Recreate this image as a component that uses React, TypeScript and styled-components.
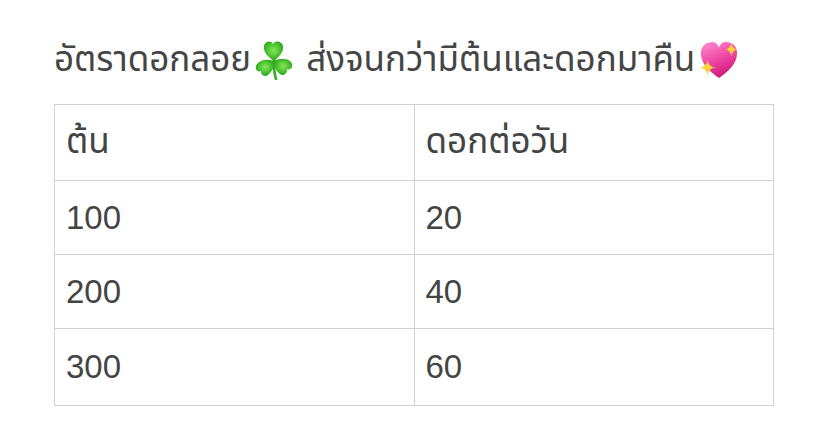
import React from "react";
import styled, { createGlobalStyle } from "styled-components";

const Global = createGlobalStyle`
  html, body { margin: 0; padding: 0; background: #ffffff; }
  body { font-family: "Noto Sans Thai", "Noto Sans", "DejaVu Sans", "Liberation Sans", sans-serif; color: #444444; }
`;

const Page = styled.div`
  width: 828px;
  height: 447px;
  box-sizing: border-box;
  padding: 22px 54px 0 54px;
  background: #ffffff;
`;

const Title = styled.h1`
  margin: 0;
  height: 82px;
  display: flex;
  align-items: center;
  font-size: 35px;
  font-weight: 400;
  color: #454545;
  white-space: nowrap;
  line-height: 1;
  padding-bottom: 6px;
  box-sizing: border-box;
`;

const Emoji = styled.svg<{ $l: number; $r: number }>`
  width: 40px;
  height: 40px;
  flex: none;
  margin: 0 ${(p) => p.$r}px 0 ${(p) => p.$l}px;
`;

const Table = styled.table`
  width: 720px;
  border-collapse: collapse;
  table-layout: fixed;
`;

const Cell = styled.td<{ $head?: boolean; $h: number }>`
  border: 1px solid #d2d2d2;
  height: ${(p) => p.$h}px;
  box-sizing: border-box;
  padding: 0 0 0 11px;
  font-size: ${(p) => (p.$head ? 35 : 33)}px;
  color: #444444;
  vertical-align: middle;
  font-family: ${(p) =>
    p.$head ? `"Noto Sans Thai", "DejaVu Sans", sans-serif` : `"Liberation Sans", sans-serif`};
`;

const Shamrock = () => (
  <Emoji viewBox="0 0 40 40" $l={3} $r={12}>
    <defs>
      <radialGradient id="lf" cx="50%" cy="45%" r="60%">
        <stop offset="0%" stopColor="#8be55a" />
        <stop offset="60%" stopColor="#46c12c" />
        <stop offset="100%" stopColor="#2a961c" />
      </radialGradient>
    </defs>
    <path d="M20 21 C20 28 20 33 22 39" stroke="#3aa82a" strokeWidth="2.6" fill="none" strokeLinecap="round" />
    <g fill="url(#lf)">
      <path d="M20 21 C14 17 9 12 10 6 C11 1 17 0 19 4 C21 0 28 1 29 6 C30 12 25 17 20 21 Z" />
      <path d="M20 21 C14 19 7 19 3 24 C0 28 3 33 7 31 C6 35 12 38 15 34 C19 30 21 26 20 21 Z" />
      <path d="M20 21 C26 18 33 18 37 22 C40 26 37 31 33 29 C34 33 29 37 26 34 C22 31 20 26 20 21 Z" />
    </g>
  </Emoji>
);

const SparkleHeart = () => (
  <Emoji viewBox="0 0 42 42" $l={3} $r={0}>
    <defs>
      <linearGradient id="hg" x1="0" y1="0" x2="0.4" y2="1">
        <stop offset="0%" stopColor="#ff8fd0" />
        <stop offset="55%" stopColor="#f04aa6" />
        <stop offset="100%" stopColor="#d21c7c" />
      </linearGradient>
    </defs>
    <path d="M22 40 C12 33 3 25 3 14 C3 6 9 2 15 2 C18 2 21 4 22 8 C23 4 26 2 29 2 C36 2 41 6 41 14 C41 25 32 33 22 40 Z" fill="url(#hg)" />
    <path d="M10 21 Q11 28 18 29 Q11 30 10 37 Q9 30 2 29 Q9 28 10 21 Z" fill="#ffd23a" />
    <path d="M35 3 Q36 9 41 10 Q36 11 35 17 Q34 11 29 10 Q34 9 35 3 Z" fill="#ffd23a" />
  </Emoji>
);

const rows = [
  ["100", "20", 74],
  ["200", "40", 74],
  ["300", "60", 77],
] as const;

export default function App() {
  return (
    <>
      <Global />
      <Page>
        <Title>
          อัตราดอกลอย
          <Shamrock />
          ส่งจนกว่ามีต้นและดอกมาคืน
          <SparkleHeart />
        </Title>
        <Table>
          <tbody>
            <tr>
              <Cell $head $h={76}>ต้น</Cell>
              <Cell $head $h={76}>ดอกต่อวัน</Cell>
            </tr>
            {rows.map((r) => (
              <tr key={r[0]}>
                <Cell $h={r[2]}>{r[0]}</Cell>
                <Cell $h={r[2]}>{r[1]}</Cell>
              </tr>
            ))}
          </tbody>
        </Table>
      </Page>
    </>
  );
}
